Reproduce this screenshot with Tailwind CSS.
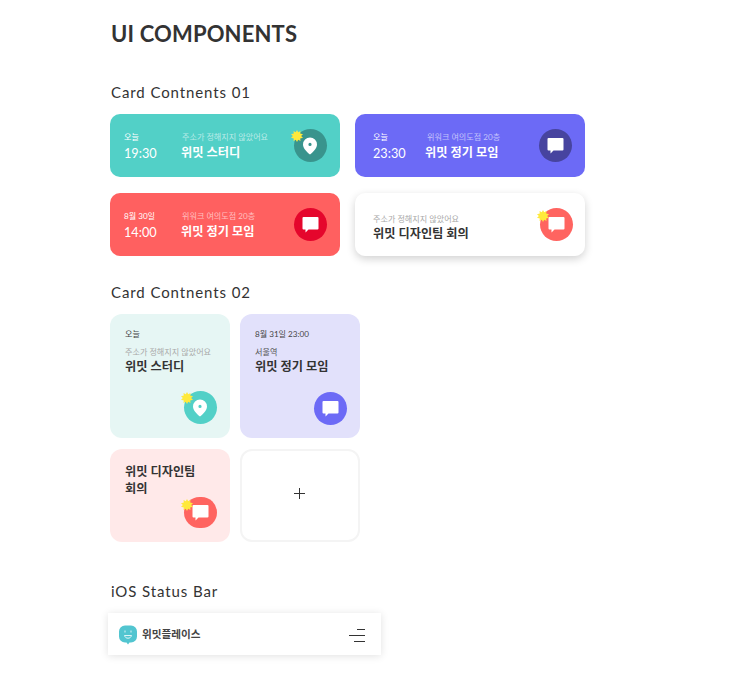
<!DOCTYPE html>
<html lang="ko">
<head>
  <meta charset="UTF-8" />
  <title>UI Components</title>
  <script src="https://cdn.jsdelivr.net/npm/@tailwindcss/browser@4"></script>
</head>
<body class="bg-white font-['Lato','Noto_Sans_CJK_KR',sans-serif] text-[#333]">
  <svg class="hidden">
    <symbol id="pin" viewBox="0 0 16 18"><path fill-rule="evenodd" d="M8 0.500a7 7 0 0 0-7 7C1 11.500 5.500 15.500 8 17.500c2.500-2 7-6 7-10a7 7 0 0 0-7-7Zm0 5.300a1.600 1.600 0 1 1 0 3.200A1.600 1.600 0 0 1 8 5.800Z" fill="#fff"/></symbol>
    <symbol id="chat" viewBox="0 0 17 17"><path d="M1.500 1h14a1 1 0 0 1 1 1v10.500a1 1 0 0 1-1 1H6.500L3.500 16.500v-3h-2a1 1 0 0 1-1-1V2a1 1 0 0 1 1-1Z" fill="#fff"/></symbol>
    <symbol id="star" viewBox="0 0 12 12"><path d="M6 0l1.200 2.300L9.500 1l-.3 2.500L12 4.200 10.100 6 12 7.800l-2.800.7.300 2.500-2.300-1.300L6 12l-1.200-2.300L2.500 11l.3-2.500L0 7.800 1.900 6 0 4.200l2.800-.7L2.500 1l2.300 1.300z" fill="#ffe93b"/></symbol>
  </svg>

  <main class="w-[736px] h-[684px] overflow-hidden pl-[110px]">
    <h1 class="pt-[19px] h-[49px] text-[22px] leading-[30px] font-bold tracking-[0.15px] text-[#333] pl-px">UI COMPONENTS</h1>

    <h2 class="mt-[33px] h-[20px] pl-px text-[15px] leading-[20px] tracking-[0.9px] text-[#333]">Card Contnents 01</h2>
    <div class="mt-[12px] grid grid-cols-[230px_230px] gap-x-[15px] gap-y-[16px]">
      <div class="h-[63px] rounded-[10px] bg-[#52d0c7] flex items-center pl-[14px] pr-[13px] text-white">
        <div class="w-[57px] pt-[2px]">
          <p class="text-[8.100px] leading-[12px]">오늘</p>
          <p class="text-[12.700px] leading-[18px] mt-[1px]">19:30</p>
        </div>
        <div class="flex-1 pt-[2px]">
          <p class="text-[8.100px] leading-[12px] text-white/60 pl-px">주소가 정해지지 않았어요</p>
          <p class="text-[12.200px] leading-[18px] mt-[1px] font-semibold">위밋 스터디</p>
        </div>
        <div class="relative w-[33px] h-[33px] rounded-full bg-[#39948d] flex items-center justify-center">
          <svg class="w-[16px] h-[18px] mr-[1px]"><use href="#pin"/></svg>
          <svg class="absolute -left-[3px] top-[1px] w-[12px] h-[12px]"><use href="#star"/></svg>
        </div>
      </div>

      <div class="h-[63px] rounded-[10px] bg-[#6c6af6] flex items-center pl-[18px] pr-[13px] text-white">
        <div class="w-[52px] pt-[2px]">
          <p class="text-[8.100px] leading-[12px]">오늘</p>
          <p class="text-[12.700px] leading-[18px] mt-[1px]">23:30</p>
        </div>
        <div class="flex-1 pt-[2px]">
          <p class="text-[8.100px] leading-[12px] text-white/60 pl-[2px]">위워크 여의도점 20층</p>
          <p class="text-[12.200px] leading-[18px] mt-[1px] font-semibold">위밋 정기 모임</p>
        </div>
        <div class="w-[33px] h-[33px] rounded-full bg-[#47449f] flex items-center justify-center">
          <svg class="w-[17px] h-[17px]"><use href="#chat"/></svg>
        </div>
      </div>

      <div class="h-[63px] rounded-[10px] bg-[#ff6060] flex items-center pl-[14px] pr-[13px] text-white">
        <div class="w-[57px] pt-[2px]">
          <p class="text-[8.100px] leading-[12px]">8월 30일</p>
          <p class="text-[12.700px] leading-[18px] mt-[1px]">14:00</p>
        </div>
        <div class="flex-1 pt-[2px]">
          <p class="text-[8.100px] leading-[12px] text-white/60 pl-px">위워크 여의도점 20층</p>
          <p class="text-[12.200px] leading-[18px] mt-[1px] font-semibold">위밋 정기 모임</p>
        </div>
        <div class="w-[33px] h-[33px] rounded-full bg-[#e5062c] flex items-center justify-center">
          <svg class="w-[17px] h-[17px]"><use href="#chat"/></svg>
        </div>
      </div>

      <div class="h-[63px] rounded-[10px] bg-white shadow-[0_3px_9px_rgba(0,0,0,0.18)] flex items-center pl-[18px] pr-[12px]">
        <div class="flex-1 pt-[6px]">
          <p class="text-[8.100px] leading-[12px] text-[#a8a8a8]">주소가 정해지지 않았어요</p>
          <p class="text-[12.200px] leading-[18px] font-semibold text-[#333]">위밋 디자인팀 회의</p>
        </div>
        <div class="relative w-[33px] h-[33px] rounded-full bg-[#ff6460] flex items-center justify-center">
          <svg class="w-[17px] h-[17px]"><use href="#chat"/></svg>
          <svg class="absolute -left-[3px] top-[2px] w-[12px] h-[12px]"><use href="#star"/></svg>
        </div>
      </div>
    </div>

    <h2 class="mt-[26px] h-[20px] pl-px text-[15px] leading-[20px] tracking-[0.9px] text-[#333]">Card Contnents 02</h2>
    <div class="mt-[12px] grid grid-cols-[120px_120px] gap-x-[10px] gap-y-[11px]">
      <div class="h-[124px] rounded-[12px] bg-[#e6f6f4] flex flex-col pl-[15px] pr-[13px] pt-[14px] pb-[14px]">
        <p class="text-[8.100px] leading-[12px] text-[#444]">오늘</p>
        <p class="text-[8.100px] leading-[12px] mt-[6px] text-[#a8a8a8]">주소가 정해지지 않았어요</p>
        <p class="text-[12.200px] leading-[18px] font-semibold text-[#333]">위밋 스터디</p>
        <div class="relative mt-auto self-end w-[33px] h-[33px] rounded-full bg-[#52d0c7] flex items-center justify-center">
          <svg class="w-[16px] h-[18px] mr-[1px]"><use href="#pin"/></svg>
          <svg class="absolute -left-[3px] top-[1px] w-[12px] h-[12px]"><use href="#star"/></svg>
        </div>
      </div>

      <div class="h-[124px] rounded-[12px] bg-[#e2e1fb] flex flex-col pl-[15px] pr-[13px] pt-[14px] pb-[13px]">
        <p class="text-[8.100px] leading-[12px] text-[#444]">8월 31일 23:00</p>
        <p class="text-[8.100px] leading-[12px] mt-[6px] text-[#555]">서울역</p>
        <p class="text-[12.200px] leading-[18px] font-semibold text-[#333]">위밋 정기 모임</p>
        <div class="mt-auto self-end w-[33px] h-[33px] rounded-full bg-[#6c6af6] flex items-center justify-center">
          <svg class="w-[17px] h-[17px]"><use href="#chat"/></svg>
        </div>
      </div>

      <div class="h-[93px] rounded-[12px] bg-[#ffe9e9] flex flex-col pl-[15px] pr-[13px] pt-[14px] pb-[14px]">
        <p class="text-[12.200px] leading-[17px] font-semibold text-[#333]">위밋 디자인팀<br />회의</p>
        <div class="relative mt-auto self-end w-[33px] h-[33px] rounded-full bg-[#ff6460] flex items-center justify-center">
          <svg class="w-[17px] h-[17px]"><use href="#chat"/></svg>
          <svg class="absolute -left-[3px] top-[2px] w-[12px] h-[12px]"><use href="#star"/></svg>
        </div>
      </div>

      <div class="h-[93px] rounded-[12px] bg-white border-2 border-[#f4f4f4] flex items-center justify-center">
        <svg class="w-[11px] h-[11px] mb-[4px] mr-[2px]" viewBox="0 0 11 11"><path d="M5.500 0v11M0 5.500h11" stroke="#333" stroke-width="1"/></svg>
      </div>
    </div>

    <h2 class="mt-[39px] h-[20px] pl-px text-[15px] leading-[20px] tracking-[0.9px] text-[#333]">iOS Status Bar</h2>
    <div class="-ml-[2px] mt-[12px] w-[273px] h-[42px] bg-white shadow-[0_1px_8px_rgba(0,0,0,0.12)] flex items-center justify-between pl-[11px] pr-[16px] pt-[2px]">
      <div class="flex items-center gap-[5px]">
        <svg class="w-[18px] h-[20px]" viewBox="0 0 18 20">
          <path d="M6 0.500h6a6 6 0 0 1 6 6v5a6 6 0 0 1-6 6h-1.500L9 19.500 7.500 17.500H6a6 6 0 0 1-6-6v-5a6 6 0 0 1 6-6Z" fill="#52c5d0"/>
          <path d="M6 5.500v2M12 5.500v2M5.500 10.500c.5 1.800 1.700 2.700 3.500 2.700s3-.9 3.500-2.700Z" stroke="#fff" stroke-opacity="0.800" stroke-width="1" fill="none"/>
        </svg>
        <span class="text-[10.600px] font-semibold text-[#444]">위밋플레이스</span>
      </div>
      <svg class="w-[16px] h-[15px]" viewBox="0 0 16 15"><path d="M8 1.500h8M0 7.500h16M5 13.500h11" stroke="#333" stroke-width="1.200"/></svg>
    </div>
  </main>
</body>
</html>
